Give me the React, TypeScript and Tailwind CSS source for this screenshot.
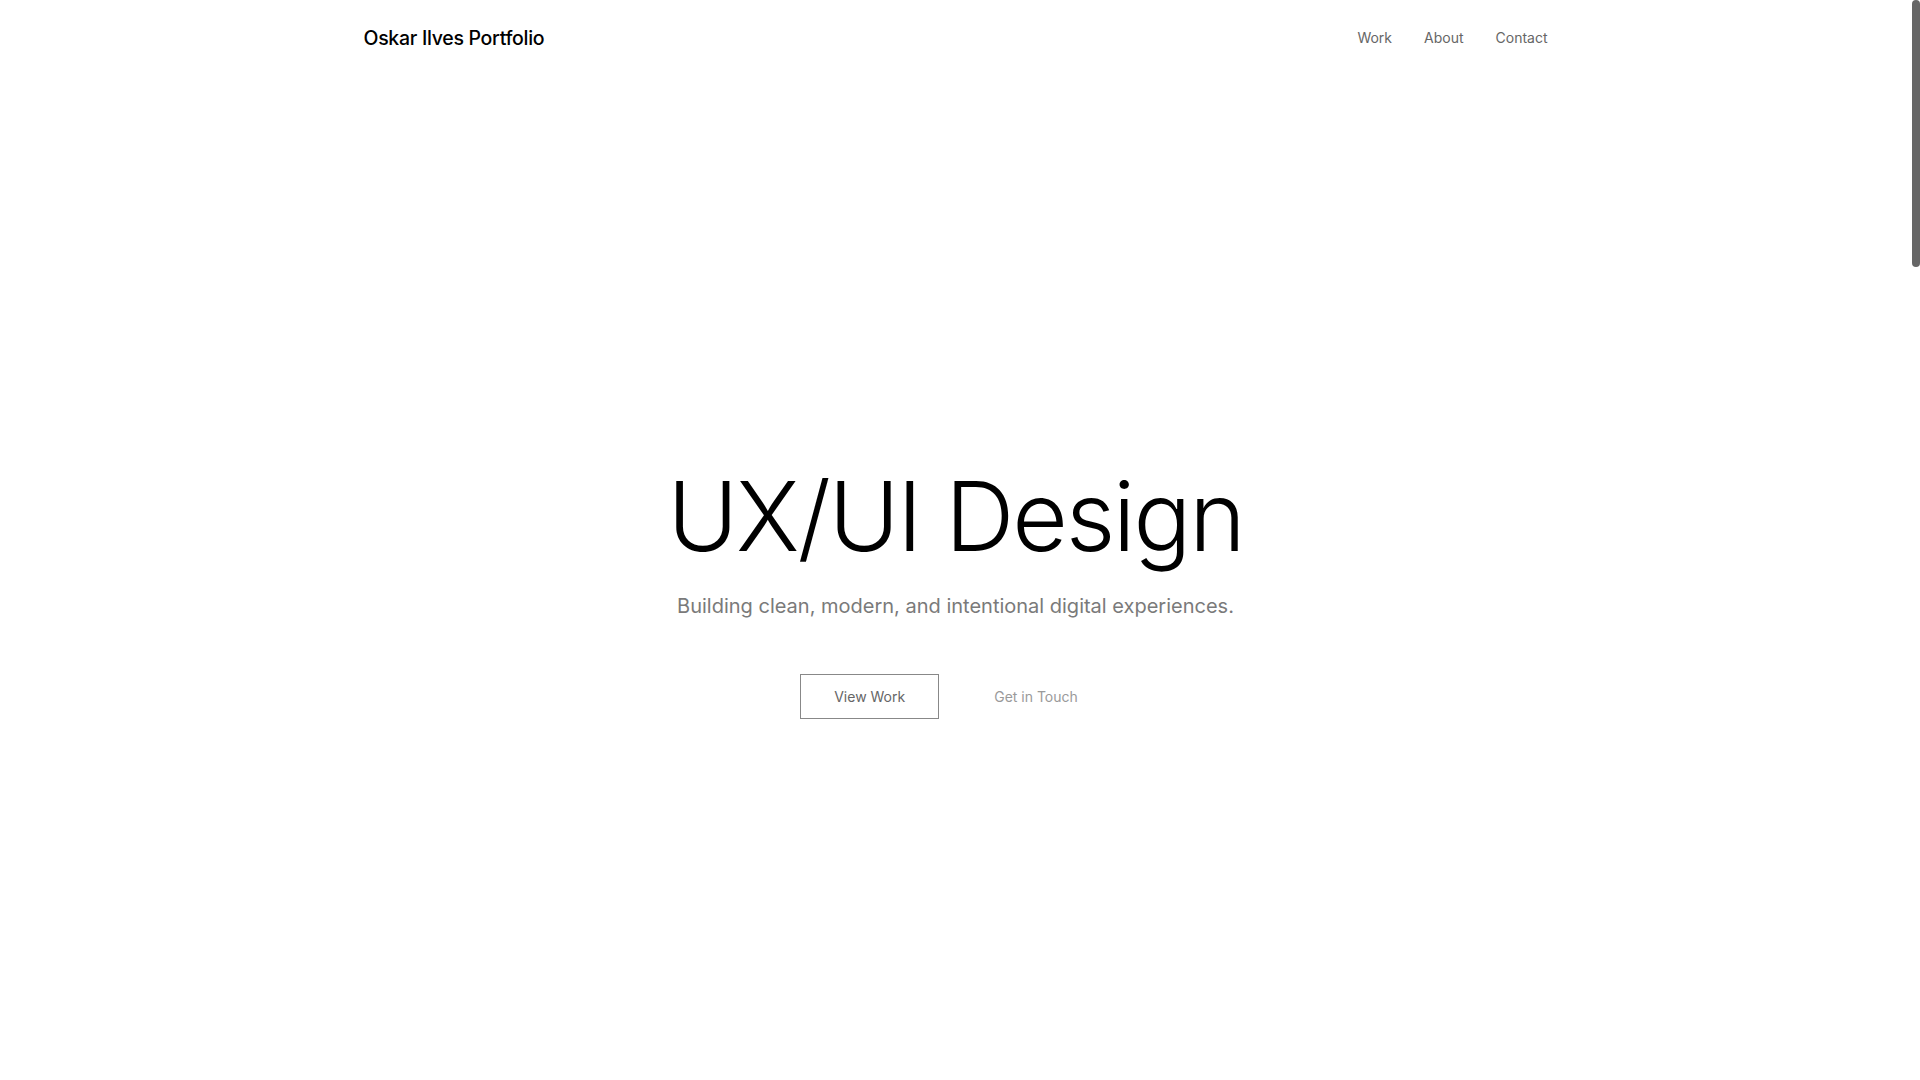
import React from "react";

export default function App() {
  return (
    <div className="relative bg-white text-[#111] font-['Inter','Noto_Sans',sans-serif] antialiased">
      <div className="pr-[9px] min-h-[4370px]">
        <header className="mx-auto max-w-[1280px] px-12 py-6 flex items-center justify-between">
          <a className="text-[19.5px] leading-7 font-medium text-black tracking-[-0.015em]">Oskar Ilves Portfolio</a>
          <nav className="flex items-center gap-8 text-sm leading-5 text-[#666]">
            <a>Work</a>
            <a>About</a>
            <a>Contact</a>
          </nav>
        </header>

        <section className="flex flex-col items-center pt-[392px] pb-[300px]">
          <h1 className="text-8xl leading-none font-light text-black tracking-[-0.022em]">UX/UI Design</h1>
          <p className="mt-7 text-xl leading-7 text-[#7a7a7a]">Building clean, modern, and intentional digital experiences.</p>
          <div className="mt-[54px] flex items-center gap-[22px]">
            <button className="h-[45px] px-[33px] border border-[#888] text-sm text-[#666]">View Work</button>
            <button className="h-[45px] px-[33px] text-sm text-[#9a9a9a]">Get in Touch</button>
          </div>
        </section>

        <section className="mx-auto max-w-[1280px] px-12 py-32">
          <div className="grid grid-cols-2 gap-10">
            <div className="h-[420px] bg-[#f4f4f4]" />
            <div className="h-[420px] bg-[#f4f4f4]" />
            <div className="h-[420px] bg-[#f4f4f4]" />
            <div className="h-[420px] bg-[#f4f4f4]" />
          </div>
        </section>
      </div>

      <div className="fixed top-0 right-0 h-screen w-[10px] bg-white flex justify-end">
        <div className="h-[267px] w-2 rounded-full bg-[#666]" />
      </div>
    </div>
  );
}
